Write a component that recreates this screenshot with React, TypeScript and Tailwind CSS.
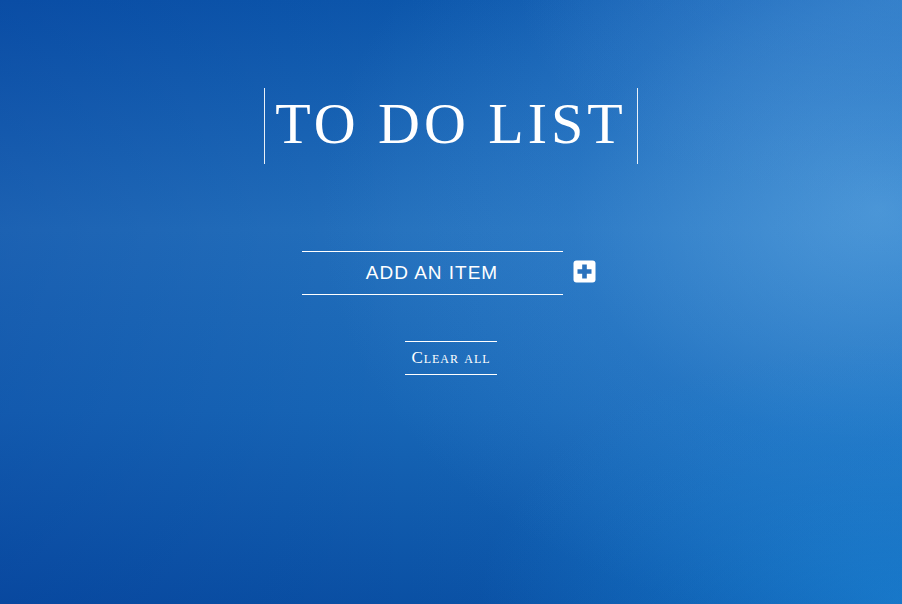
import { useState } from 'react'

export default function App() {
  const [item, setItem] = useState('')

  return (
    <div className="relative h-[604px] w-full overflow-hidden bg-[linear-gradient(180deg,#0c56ab_0%,#2370bc_38%,#1766b6_68%,#0a50a4_100%)]">
      {/* light glow on the right */}
      <div className="pointer-events-none absolute inset-0 bg-[radial-gradient(ellipse_560px_420px_at_880px_210px,rgba(120,180,232,0.6),rgba(80,150,220,0.25)_55%,rgba(0,0,0,0)_100%)]" />
      <div className="pointer-events-none absolute inset-0 bg-[radial-gradient(ellipse_380px_200px_at_900px_0px,rgba(90,150,215,0.45),rgba(0,0,0,0)_100%)]" />
      <div className="pointer-events-none absolute inset-0 bg-[radial-gradient(ellipse_420px_260px_at_900px_600px,rgba(30,140,220,0.55),rgba(0,0,0,0)_100%)]" />
      <div className="pointer-events-none absolute inset-0 bg-[linear-gradient(90deg,rgba(0,40,140,0.2)_0%,rgba(0,0,0,0)_45%,rgba(30,140,220,0.2)_100%)]" />

      <div className="relative flex flex-col items-center pt-[88px]">
        {/* Title */}
        <div className="h-[76px] border-x border-white/90 pl-[10px] pr-[10px] flex items-center">
          <h1 className="font-['Liberation_Serif',serif] text-[58px] leading-none tracking-[4px] text-white -mt-[4px]">
            TO DO LIST
          </h1>
        </div>

        {/* Add item */}
        <div className="mt-[87px] flex items-center pr-[5px]">
          <input
            value={item}
            onChange={e => setItem(e.target.value)}
            placeholder="ADD AN ITEM"
            className="h-[44px] w-[261px] border-y border-white bg-transparent text-center font-['Liberation_Sans',sans-serif] text-[19px] tracking-[1px] text-white placeholder:text-white outline-none"
          />
          <button className="ml-[10px] -mt-[3px]">
            <svg width="23" height="23" viewBox="0 0 23 23">
              <rect x="0.5" y="0.5" width="22" height="22" rx="3" fill="white" />
              <path d="M9.2 4.5h4.6v4.7h4.7v4.6h-4.7v4.7H9.2v-4.7H4.5V9.2h4.7z" fill="#2a72bd" />
            </svg>
          </button>
        </div>

        {/* Clear */}
        <button className="mt-[46px] h-[34px] w-[92px] border-y border-white font-['Liberation_Serif',serif] text-[17px] [font-variant:small-caps] tracking-[1px] text-white">
          Clear all
        </button>
      </div>
    </div>
  )
}
